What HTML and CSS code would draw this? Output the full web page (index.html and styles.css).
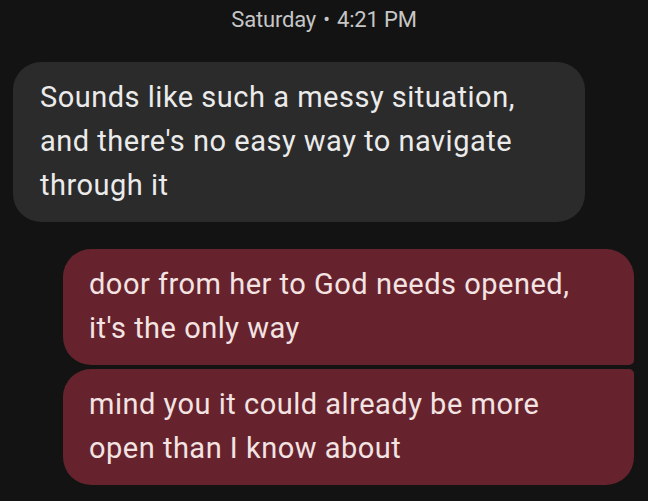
FILE: index.html
```html
<!DOCTYPE html>
<html>
<head>
<meta charset="utf-8">
<link rel="stylesheet" href="styles.css">
</head>
<body>
<div class="thread">
  <div class="stamp">Saturday <span class="dot">•</span> 4:21 PM</div>
  <div class="bubble received">
    <span class="line">Sounds like such a messy situation,</span>
    <span class="line">and there's no easy way to navigate</span>
    <span class="line">through it</span>
  </div>
  <div class="sent-group">
    <div class="bubble sent first">
      <span class="line">door from her to God needs opened,</span>
      <span class="line">it's the only way</span>
    </div>
    <div class="bubble sent last">
      <span class="line">mind you it could already be more</span>
      <span class="line">open than I know about</span>
    </div>
  </div>
</div>
</body>
</html>
```
FILE: styles.css
```css
html, body {
  margin: 0;
  padding: 0;
  background: #131313;
}
body {
  width: 648px;
  height: 501px;
  overflow: hidden;
  font-family: Roboto, "Noto Sans", sans-serif;
}
.thread {
  display: flex;
  flex-direction: column;
}
.stamp {
  height: 40px;
  text-align: center;
  color: #c6c6c6;
  font-size: 22px;
  line-height: 38px;
  letter-spacing: -0.2px;
}
.dot {
  font-size: 20px;
  vertical-align: 1px;
  margin: 0 2px;
}
.bubble {
  box-sizing: border-box;
  font-size: 29px;
  line-height: 44px;
  letter-spacing: 0.5px;
  padding: 13px 26px 15px 27px;
}
.line {
  display: block;
  white-space: nowrap;
}
.received {
  margin-top: 22px;
  margin-left: 13px;
  width: 572px;
  background: #2b2b2b;
  color: #ebebeb;
  border-radius: 28px;
}
.sent-group {
  margin-top: 27px;
  margin-left: 63px;
  width: 571px;
  display: flex;
  flex-direction: column;
  gap: 4px;
}
.sent {
  background: #67232d;
  color: #f3e3e3;
  padding-left: 26px;
}
.sent.first {
  border-radius: 28px 28px 5px 28px;
}
.sent.last {
  border-radius: 28px 5px 28px 28px;
}
```
